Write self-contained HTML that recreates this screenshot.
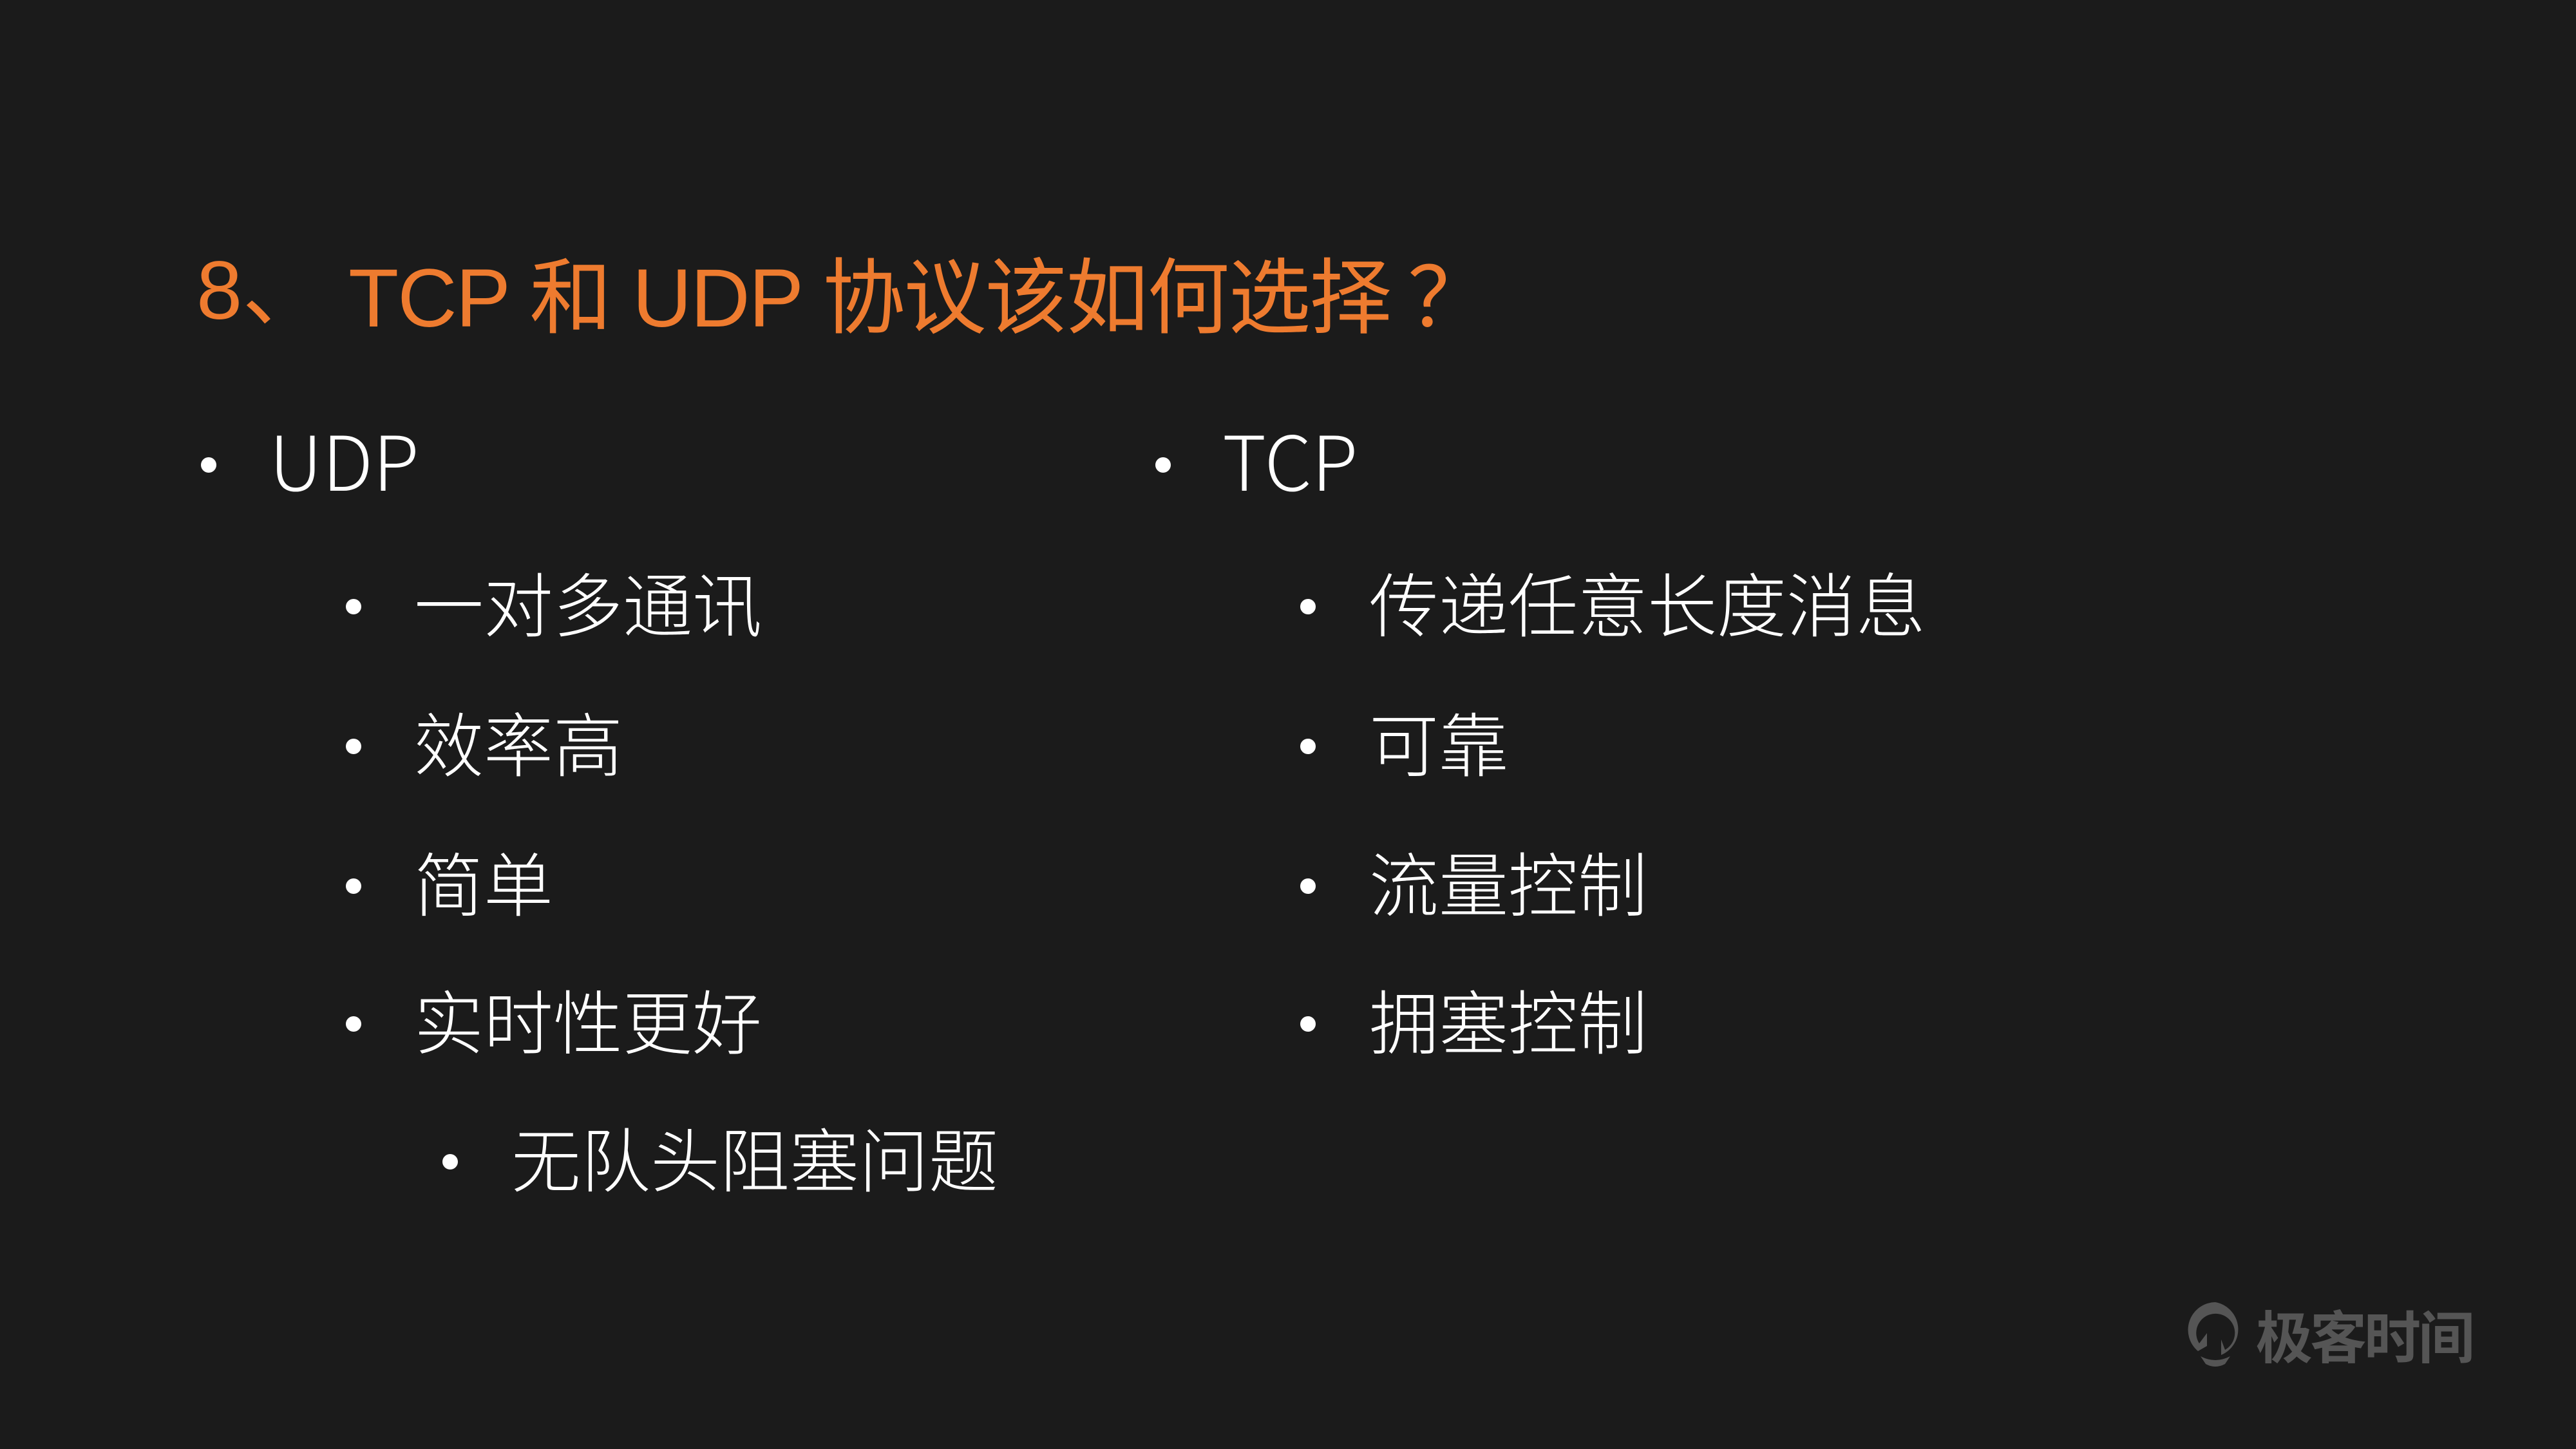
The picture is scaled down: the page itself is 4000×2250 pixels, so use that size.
<!DOCTYPE html>
<html><head><meta charset="utf-8"><style>
html,body{margin:0;padding:0;}
body{width:4000px;height:2250px;background:#1b1b1b;position:relative;overflow:hidden;font-family:"Liberation Sans","Noto Sans CJK SC",sans-serif;font-weight:300;color:#fff;}
.t{position:absolute;white-space:nowrap;line-height:1;}
.d{position:absolute;width:24px;height:24px;border-radius:50%;background:#fff;}
.title{color:#ee7b2f;font-size:128px;top:388px;font-family:"Liberation Sans","Noto Sans CJK SC",sans-serif;font-weight:400;}
.l1{font-size:117px;font-family:"Noto Sans CJK SC",sans-serif;}
.l2{font-size:108px;font-family:"Noto Sans CJK SC",sans-serif;}
</style></head><body>
<div class="t title" style="left:305px">8、</div>
<div class="t title" style="left:541px;letter-spacing:-2px">TCP 和 UDP 协议该如何选择<span style="font-family:'Noto Sans CJK SC',sans-serif"> ？</span></div>

<div class="d" style="left:312px;top:710px"></div>
<div class="t l1" style="left:418px;top:653px">UDP</div>
<div class="d" style="left:1794px;top:710px"></div>
<div class="t l1" style="left:1898px;top:653px">TCP</div>

<div class="d" style="left:537px;top:930px"></div>
<div class="t l2" style="left:643px;top:880px">一对多通讯</div>
<div class="d" style="left:537px;top:1147px"></div>
<div class="t l2" style="left:643px;top:1097px">效率高</div>
<div class="d" style="left:537px;top:1364px"></div>
<div class="t l2" style="left:643px;top:1314px">简单</div>
<div class="d" style="left:537px;top:1578px"></div>
<div class="t l2" style="left:643px;top:1528px">实时性更好</div>
<div class="d" style="left:687px;top:1792px"></div>
<div class="t l2" style="left:794px;top:1742px">无队头阻塞问题</div>

<div class="d" style="left:2019px;top:930px"></div>
<div class="t l2" style="left:2126px;top:880px">传递任意长度消息</div>
<div class="d" style="left:2019px;top:1147px"></div>
<div class="t l2" style="left:2126px;top:1097px">可靠</div>
<div class="d" style="left:2019px;top:1364px"></div>
<div class="t l2" style="left:2126px;top:1314px">流量控制</div>
<div class="d" style="left:2019px;top:1578px"></div>
<div class="t l2" style="left:2126px;top:1528px">拥塞控制</div>

<svg style="position:absolute;left:3393px;top:2018px" width="95" height="110" viewBox="0 0 95 110">
<path d="M47 4 A43 43 0 0 0 20 80 L34 72 L34 52 L22 68 A30 30 0 1 1 62 78 L56 62 L56 86 A43 43 0 0 0 47 4 Z" fill="#555"/>
<path d="M24 88 Q47 100 70 88 L62 100 Q47 108 32 100 Z" fill="#555"/>
</svg>
<div class="t" style="left:3503px;top:2028px;font-size:88px;color:#555;font-family:'Noto Sans CJK SC',sans-serif;font-weight:700;letter-spacing:-4px">极客时间</div>
</body></html>
